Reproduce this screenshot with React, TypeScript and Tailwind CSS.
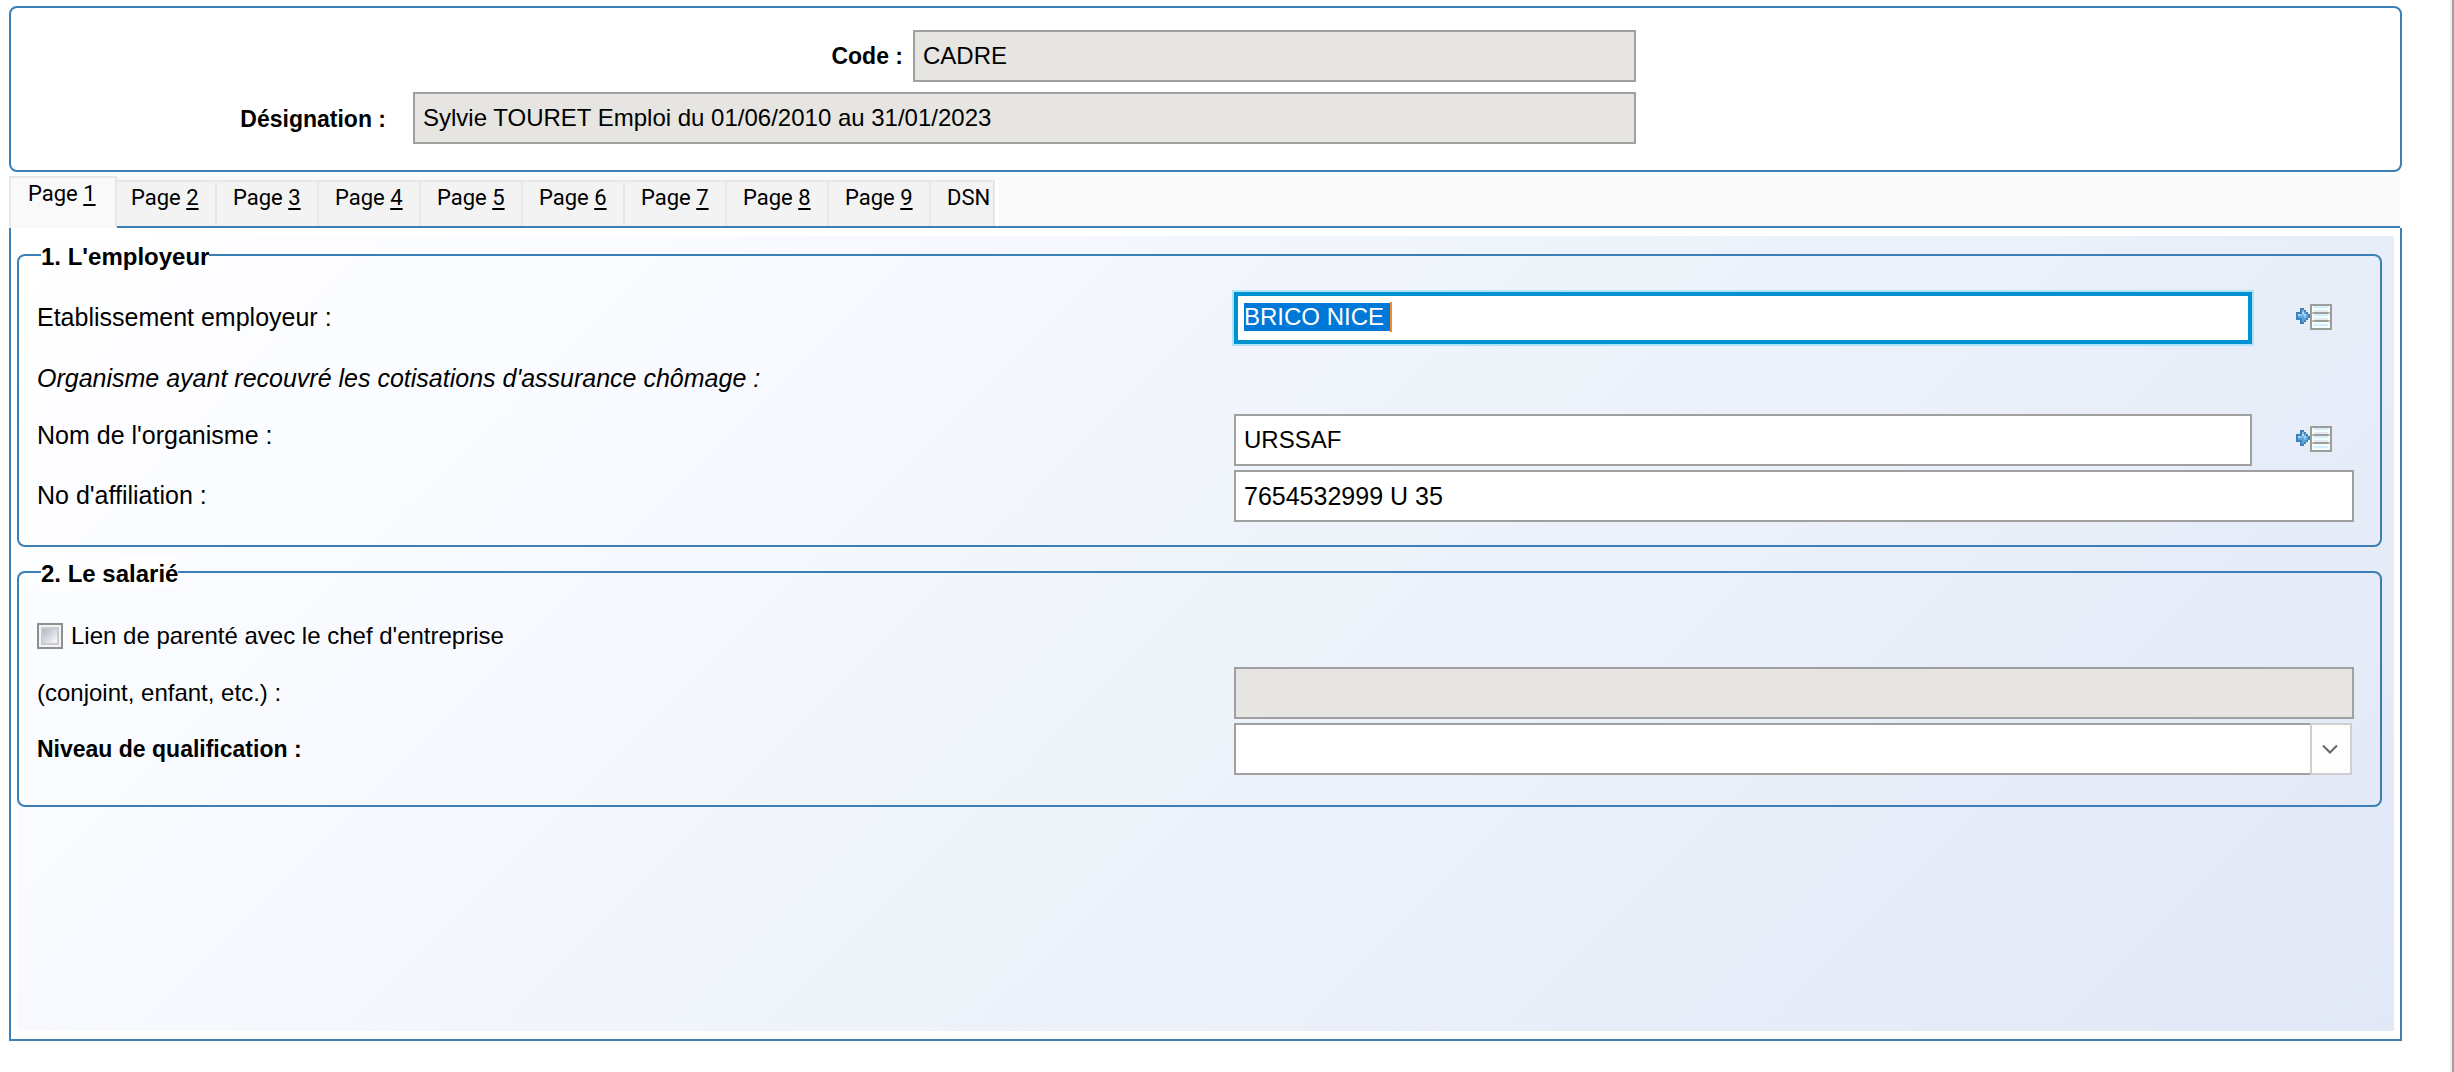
import { useEffect, useRef } from "react";

const TABS = ["1", "2", "3", "4", "5", "6", "7", "8", "9"];

function PickIcon() {
  return (
    <svg width="36" height="28" viewBox="0 0 36 28" shapeRendering="crispEdges" aria-hidden="true">
      <path d="M4 4h4v2h2v2h2v2h2v4h-2v2h-2v2h-2v2h-4v-4h-4v-8h4z" fill="#3f80b9" />
      <path d="M6 6h2v2h2v2h2v4h-2v2h-2v2h-2v-4h-4v-4h4z" fill="#5aa3dd" />
      <path d="M2 10h2v2h-2zM6 8h2v2h-2zM8 10h2v2h-2z" fill="#b3d6f2" />
      <path d="M4 10h4v2h-4zM8 12h2v2h-2zM6 6h2v2h-2z" fill="#7fbbe8" />
      <rect x="14" y="0" width="22" height="26" fill="#9b9d97" />
      <rect x="16" y="2" width="18" height="6" fill="#f3fdff" />
      <rect x="18" y="2" width="14" height="2" fill="#d3effc" />
      <rect x="18" y="6" width="14" height="2" fill="#e6e8f0" />
      <rect x="16" y="10" width="18" height="6" fill="#f3fdff" />
      <rect x="18" y="10" width="14" height="2" fill="#d3effc" />
      <rect x="18" y="14" width="14" height="2" fill="#e6e8f0" />
      <rect x="16" y="18" width="18" height="6" fill="#f3fdff" />
      <rect x="18" y="20" width="14" height="2" fill="#d3effc" />
      <path d="M16 8h2v2h-2zM32 8h2v2h-2zM16 16h2v2h-2zM32 16h2v2h-2z" fill="#b9bbb4" />
    </svg>
  );
}

function PickButton({ label }: { label: string }) {
  return (
    <button type="button" aria-label={label} className="flex w-[102px] items-center pl-11">
      <PickIcon />
    </button>
  );
}

function Header() {
  return (
    <section className="flex flex-col gap-[10px] rounded-lg border-2 border-[#3a7fb5] pt-[22px] pb-[26px]">
      <div className="grid grid-cols-[902fr_723fr_764fr] items-center">
        <label htmlFor="code" className="pr-[10px] text-right text-[23px] font-bold">
          Code :
        </label>
        <input
          id="code"
          readOnly
          defaultValue="CADRE"
          className="h-[52px] w-full min-w-0 border-2 border-[#a0a0a0] bg-[#e6e5e1] px-2 text-[24px] outline-none"
        />
      </div>
      <div className="grid grid-cols-[402fr_1223fr_764fr] items-center">
        <label htmlFor="designation" className="pt-[2px] pr-[27px] text-right text-[23px] font-bold">
          Désignation :
        </label>
        <input
          id="designation"
          readOnly
          defaultValue="Sylvie TOURET Emploi du 01/06/2010 au 31/01/2023"
          className="h-[52px] w-full min-w-0 border-2 border-[#a0a0a0] bg-[#e6e5e1] px-2 text-[24px] outline-none"
        />
      </div>
    </section>
  );
}

function TabBar() {
  return (
    <div
      role="tablist"
      className="mt-1 mr-[2px] flex h-[52px] border-b-2 border-[#3a7fb5] bg-[#f9f9f9] font-['Roboto',sans-serif] text-[22px] leading-[26px]"
    >
      {TABS.map((n, i) =>
        i === 0 ? (
          <button
            key={n}
            type="button"
            role="tab"
            aria-selected="true"
            className="z-10 -mr-[2px] flex h-[52px] w-[108px] shrink-0 items-start border-2 border-b-0 border-[#e7e7e7] bg-[#f9f9f9] pt-[3px] pl-[17px] whitespace-pre"
          >
            Page <span className="underline decoration-2 underline-offset-3">{n}</span>
          </button>
        ) : (
          <button
            key={n}
            type="button"
            role="tab"
            aria-selected="false"
            className="mt-1 flex w-[102px] items-start border-t-2 border-r-2 border-[#e7e7e7] bg-[#f3f3f3] pt-[3px] pl-4 whitespace-pre"
          >
            Page <span className="underline decoration-2 underline-offset-3">{n}</span>
          </button>
        ),
      )}
      <button
        type="button"
        role="tab"
        aria-selected="false"
        className="mt-1 flex w-16 items-start border-t-2 border-r-2 border-[#e7e7e7] bg-[#f3f3f3] pt-[3px] pl-4"
      >
        DSN
      </button>
      <span className="mt-1 w-1 bg-white" />
    </div>
  );
}

function Employer() {
  const site = useRef<HTMLInputElement>(null);

  useEffect(() => {
    site.current?.focus();
    site.current?.select();
  }, []);

  return (
    <fieldset className="min-w-0 rounded-lg border-2 border-[#3a7fb5] pr-[26px] pb-[23px]">
      <legend className="ml-[22px] bg-[#fefefe] pt-1 text-[24px] leading-[26px] font-bold">1. L'employeur</legend>
      <div className="grid grid-cols-[1215fr_1120fr] items-center pt-[22px]">
        <label htmlFor="site" className="pl-[18px] text-[25px]">
          Etablissement employeur :
        </label>
        <div className="flex">
          <div className="relative flex-1">
            <input
              id="site"
              ref={site}
              defaultValue="BRICO NICE "
              className="h-[52px] w-full border-4 border-[#0091d0] bg-white px-[6px] pb-[2px] text-[24px] leading-[30px] outline-2 outline-[#b0e2f8] selection:bg-[#0078d7] selection:text-white"
            />
            <span className="absolute top-[10px] left-[156px] h-[30px] w-[2px] bg-[#f58a2c]" />
          </div>
          <PickButton label="Choisir l'établissement" />
        </div>
      </div>
      <p className="flex h-[70px] items-center pl-[18px] text-[25px] italic">
        Organisme ayant recouvré les cotisations d'assurance chômage :
      </p>
      <div className="grid grid-cols-[1215fr_1120fr] items-center">
        <label htmlFor="organisme" className="pb-2 pl-[18px] text-[25px]">
          Nom de l'organisme :
        </label>
        <div className="flex">
          <input
            id="organisme"
            defaultValue="URSSAF"
            className="h-[52px] min-w-0 flex-1 border-2 border-[#a0a0a0] bg-white px-2 text-[24px] outline-none"
          />
          <PickButton label="Choisir l'organisme" />
        </div>
      </div>
      <div className="grid grid-cols-[1215fr_1120fr] items-center pt-1">
        <label htmlFor="affiliation" className="pl-[18px] text-[25px]">
          No d'affiliation :
        </label>
        <input
          id="affiliation"
          defaultValue="7654532999 U 35"
          className="h-[52px] w-full border-2 border-[#a0a0a0] bg-white px-2 text-[25px] outline-none"
        />
      </div>
    </fieldset>
  );
}

function Employee() {
  return (
    <fieldset className="mt-[10px] min-w-0 rounded-lg border-2 border-[#3a7fb5] pr-[26px] pb-[30px]">
      <legend className="ml-[22px] bg-[#fefefe] pt-1 text-[24px] leading-[26px] font-bold">2. Le salarié</legend>
      <div className="pt-[18px]">
        <div className="flex h-[62px] items-center gap-2 pl-[18px]">
          <input
            id="parente"
            type="checkbox"
            className="size-[26px] appearance-none border-2 border-[#8e8f8f] bg-linear-135 from-[#b4bac6] from-20% to-[#fafafa] to-80% shadow-[inset_0_0_0_2px_#f4f4f4,inset_0_0_0_4px_#c9ccd2]"
          />
          <label htmlFor="parente" className="text-[24px]">
            Lien de parenté avec le chef d'entreprise
          </label>
        </div>
      </div>
      <div className="grid grid-cols-[1215fr_1120fr] items-center">
        <label htmlFor="lien" className="pl-[18px] text-[24px]">
          (conjoint, enfant, etc.) :
        </label>
        <input
          id="lien"
          readOnly
          className="h-[52px] w-full border-2 border-[#a0a0a0] bg-[#e6e5e1] px-2 text-[24px] outline-none"
        />
      </div>
      <div className="grid grid-cols-[1215fr_1120fr] items-center pt-1">
        <label htmlFor="niveau" className="pl-[18px] text-[23px] font-bold">
          Niveau de qualification :
        </label>
        <div className="relative mr-[2px]">
          <select
            id="niveau"
            defaultValue=""
            className="block h-[52px] w-full appearance-none border-2 border-[#a0a0a0] bg-white px-2 text-[24px] outline-none"
          >
            <option value=""></option>
          </select>
          <span className="pointer-events-none absolute inset-y-0 right-0 flex w-[42px] items-center justify-center border-2 border-[#cfcfcf] bg-[#fdfdfd] pr-[2px]">
            <svg width="16" height="10" viewBox="0 0 16 10" fill="none" stroke="#666" strokeWidth="2" aria-hidden="true">
              <path d="M1 1.5 8 8.5 15 1.5" />
            </svg>
          </span>
        </div>
      </div>
    </fieldset>
  );
}

export default function App() {
  return (
    <div className="min-h-screen border-r-2 border-[#a0a0a0] bg-white font-['Liberation_Sans',Arial,sans-serif] text-black">
      <main className="flex min-h-screen flex-col border-r-2 border-[#efefef] pt-[6px] pr-12 pb-[31px] pl-[9px]">
        <Header />
        <TabBar />
        <div className="flex flex-1 flex-col border-2 border-t-0 border-[#3a7fb5] px-[6px] py-2">
          <form className="flex-1 bg-[linear-gradient(135deg,#ffffff_0%,#f8faff_25%,#f0f4fb_46%,#e7edf8_78%,#e1e8f6_100%)] pt-1 pr-3">
            <Employer />
            <Employee />
          </form>
        </div>
      </main>
    </div>
  );
}
